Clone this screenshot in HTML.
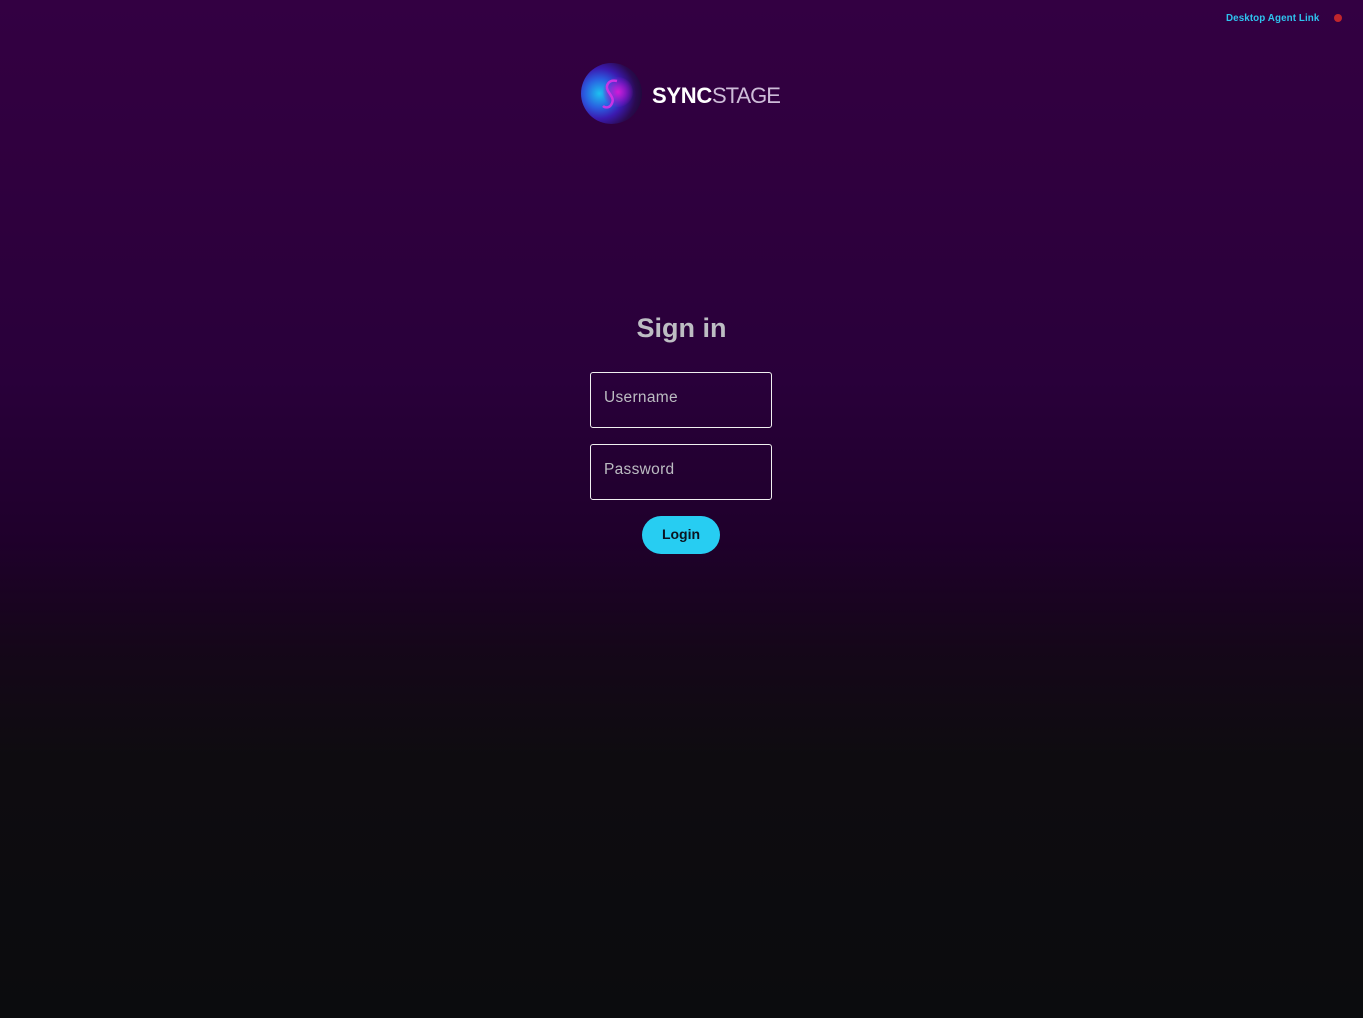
<!DOCTYPE html>
<html><head><meta charset="utf-8"><style>
html,body{margin:0;padding:0}
body{width:1363px;height:1018px;overflow:hidden;position:relative;font-family:"Liberation Sans",sans-serif;
background:linear-gradient(to bottom,#330042 0px,#2f003e 180px,#29003a 380px,#1f002b 540px,#150719 650px,#0e0c10 760px,#0b0c0e 1018px);}
.link{position:absolute;top:13px;left:1226px;font-size:9.8px;font-weight:bold;color:#2ec4ef;letter-spacing:0.1px}
.dot{position:absolute;top:14px;left:1334px;width:8px;height:8px;border-radius:50%;background:#c0262c}
.logo{position:absolute;left:581px;top:63px;width:61px;height:61px;border-radius:50%;
background:radial-gradient(circle at 30% 50%,#1dc1f0 0%,#2a5de0 28%,#3b1ab0 48%,#2a0a50 70%,#120820 100%);overflow:hidden}
.logo .p{position:absolute;left:22px;top:14px;width:30px;height:30px;border-radius:50%;background:radial-gradient(circle,#d21ad8 0%,rgba(150,20,200,0.5) 50%,rgba(0,0,0,0) 75%)}
.brand{position:absolute;left:652px;top:83px;font-size:22px;color:#fff;letter-spacing:-0.6px;white-space:nowrap}
.brand b{font-weight:bold;letter-spacing:-0.3px}
.brand span{font-weight:normal;color:#cdbcd8;font-size:22px;letter-spacing:-1px}
h1{position:absolute;top:313px;left:0;width:1363px;text-align:center;margin:0;font-size:27px;color:#bdbdc3;font-weight:bold}
.in{position:absolute;left:590px;width:180px;height:54px;border:1px solid #f0f0f0;border-radius:3px}
.in div{position:absolute;left:13px;top:16px;font-size:15.5px;color:#bcbcc2;letter-spacing:0.3px}
.btn{position:absolute;left:642px;top:516px;width:78px;height:38px;border-radius:19px;background:#27cdf2;text-align:center;line-height:37px;font-weight:bold;font-size:14px;color:#0c1420}
</style></head><body>
<div class="link">Desktop Agent Link</div><div class="dot"></div>
<div class="logo"><div class="p"></div>
<svg width="61" height="61" style="position:absolute;left:0;top:0"><path d="M36 18 C28 16 24 22 27 28 C30 33 34 36 30 42 C28 45 24 45 22 43" stroke="#e030e8" stroke-width="2.5" fill="none" opacity="0.85"/></svg></div>
<div class="brand"><b>SYNC</b><span>STAGE</span></div>
<h1>Sign in</h1>
<div class="in" style="top:372px"><div>Username</div></div>
<div class="in" style="top:444px"><div>Password</div></div>
<div class="btn">Login</div>
</body></html>
